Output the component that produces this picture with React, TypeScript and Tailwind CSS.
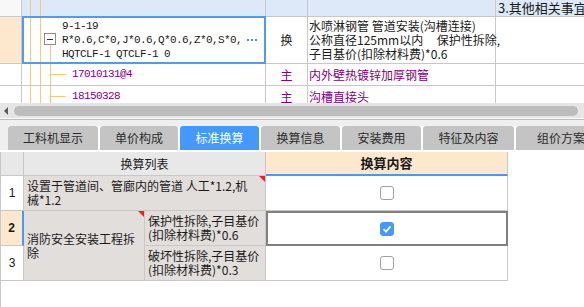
import React from 'react';

const line = 'border-[#c8c8c8]';
const cjk = "font-['Noto_Sans_CJK_SC','Liberation_Sans',sans-serif]";
const mono = "font-['Liberation_Mono','Noto_Sans_CJK_SC',monospace] text-[11px] tracking-[-0.6px]";

function Guides() {
  return (
    <>
      <div className="w-[8px] shrink-0" />
      <div className="w-[10px] shrink-0 border-l border-[#fcc878]" />
      <div className="w-[10px] shrink-0 border-l border-[#fcc878]" />
    </>
  );
}

function ChildRow({ code, name }: { code: string; name: string }) {
  return (
    <div className="flex h-[22px]">
      <div className={`w-[22px] shrink-0 border-r border-b ${line}`} />
      <div className={`w-[244px] shrink-0 flex border-r border-b ${line}`}>
        <Guides />
        <div className="w-[16px] shrink-0 border-l border-[#fcc878] flex items-center">
          <div className="h-px w-[15px] bg-[#fcc878]" />
        </div>
        <div className={`ml-[6px] flex items-center text-[#800080] ${mono}`}>{code}</div>
      </div>
      <div className={`w-[42px] shrink-0 border-r border-b ${line} flex items-center justify-center text-[12px] text-[#800080] ${cjk}`}>
        主
      </div>
      <div className={`w-[188px] shrink-0 border-r border-b ${line} pl-[1px] flex items-center text-[12px] text-[#800080] whitespace-nowrap ${cjk}`}>
        {name}
      </div>
      <div className={`flex-1 border-b ${line}`} />
    </div>
  );
}

function Tab({ label, w, active }: { label: string; w: string; active?: boolean }) {
  return (
    <div
      className={`${w} shrink-0 h-[24px] rounded-t-[3px] flex items-center justify-center text-[12px] ${cjk} ${
        active ? 'bg-[#4499ff] text-white' : 'bg-[#c4c4c4] text-[#2b2b2b]'
      }`}
    >
      {label}
    </div>
  );
}

function Check({ on }: { on?: boolean }) {
  return (
    <div
      className={`w-[14px] h-[14px] rounded-[3px] border flex items-center justify-center ${
        on ? 'bg-[#4499ff] border-[#4499ff]' : 'bg-white border-[#a0a0a0]'
      }`}
    >
      {on && (
        <svg width="10" height="10" viewBox="0 0 10 10">
          <path d="M1.5 5.2 L4 7.6 L8.6 2.4" stroke="#fff" strokeWidth="1.8" fill="none" />
        </svg>
      )}
    </div>
  );
}

function Flag() {
  return (
    <div className="absolute right-0 top-0 w-0 h-0 border-t-[6px] border-t-[#ff1a1a] border-l-[6px] border-l-transparent" />
  );
}

export default function App() {
  return (
    <div className={`w-[584px] h-[307px] overflow-hidden bg-white text-[#1a1a1a] ${cjk}`}>
      {/* upper grid */}
      <div className="h-[103px] overflow-hidden">
        <div className="flex h-[17px]">
          <div className={`w-[22px] shrink-0 border-r border-b ${line} bg-[#f8f8f8]`} />
          <div className={`w-[244px] shrink-0 flex border-r border-b ${line} bg-[#dde9f9]`}>
            <Guides />
          </div>
          <div className={`w-[42px] shrink-0 border-r border-b ${line} bg-[#dde9f9]`} />
          <div className={`w-[188px] shrink-0 border-r border-b ${line} bg-[#dde9f9]`} />
          <div className={`flex-1 min-w-0 border-b ${line} bg-[#dde9f9] pl-[2px] text-[13px] leading-[15px] whitespace-nowrap overflow-hidden`}>
            3.其他相关事宜说明
          </div>
        </div>

        <div className="flex h-[47px]">
          <div className={`w-[22px] shrink-0 border-r border-b ${line} bg-[#fde8cd]`} />
          <div className="w-[244px] h-[48px] -mt-px shrink-0 flex border-2 border-[#4c9cf5]">
            <div className="w-[6px] shrink-0" />
            <div className="w-[10px] shrink-0 border-l border-[#fcc878]" />
            <div className="w-[4px] shrink-0 border-l border-[#fcc878]" />
            <div className="w-[12px] shrink-0 flex flex-col pt-[15px]">
              <div className="w-[12px] h-[12px] border border-[#8c8c8c] flex items-center justify-center">
                <div className="w-[6px] h-px bg-[#333]" />
              </div>
              <div className="flex-1 w-px ml-[6px] bg-[#fcc878]" />
            </div>
            <div className={`ml-[6px] flex flex-col justify-center leading-[14px] whitespace-nowrap ${mono}`}>
              <div>9-1-19</div>
              <div className="flex items-center">
                R*0.6,C*0,J*0.6,Q*0.6,Z*0,S*0,
                <span className="ml-[5px] flex gap-[2px]">
                  <span className="w-[2px] h-[2px] bg-[#3d8ee0]" />
                  <span className="w-[2px] h-[2px] bg-[#3d8ee0]" />
                  <span className="w-[2px] h-[2px] bg-[#3d8ee0]" />
                </span>
              </div>
              <div>HQTCLF-1 QTCLF-1 0</div>
            </div>
          </div>
          <div className={`w-[42px] shrink-0 border-r border-b ${line} flex items-center justify-center text-[12px]`}>
            换
          </div>
          <div className={`w-[188px] shrink-0 border-r border-b ${line} pl-[1px] flex flex-col justify-center text-[12px] leading-[14px] whitespace-pre`}>
            <div>水喷淋钢管 管道安装(沟槽连接)</div>
            <div>公称直径125mm以内     保护性拆除,</div>
            <div>子目基价(扣除材料费)*0.6</div>
          </div>
          <div className={`flex-1 border-b ${line}`} />
        </div>

        <ChildRow code="17010131@4" name="内外壁热镀锌加厚钢管" />
        <ChildRow code="18150328" name="沟槽直接头" />
      </div>

      {/* horizontal scrollbar */}
      <div className="h-[15px] bg-[#e6e6e6] flex items-center">
        <div className="ml-[4px] w-0 h-0 border-y-[4px] border-y-transparent border-r-[4px] border-r-[#5a5a5a]" />
        <div className="ml-[6px] mr-[6px] flex-1 h-[10px] rounded-full bg-[#bdbdbd]" />
      </div>
      <div className="h-[1px] bg-[#fafafa]" />
      <div className="h-[1px] bg-[#bcbcbc]" />

      {/* tabs */}
      <div className="bg-[#efefef] pt-[6px] pl-[8px]">
        <div className="flex gap-[2px] bg-white">
          <Tab label="工料机显示" w="w-[90px]" />
          <Tab label="单价构成" w="w-[78px]" />
          <Tab label="标准换算" w="w-[79px]" active />
          <Tab label="换算信息" w="w-[79px]" />
          <Tab label="安装费用" w="w-[79px]" />
          <Tab label="特征及内容" w="w-[91px]" />
          <Tab label="组价方案" w="w-[90px]" />
        </div>
      </div>

      {/* conversion table */}
      <div className="pt-[2px] bg-white">
        <div className={`w-[508px] border-l ${line}`}>
          <div className="flex h-[24px]">
            <div className={`w-[23px] shrink-0 border-r border-b ${line} bg-[#e8e8e8]`} />
            <div className={`w-[242px] shrink-0 border-r border-b ${line} bg-[#e8e8e8] flex items-center justify-center text-[12px]`}>
              换算列表
            </div>
            <div className={`w-[242px] shrink-0 border-r ${line} border-b-2 border-b-[#4499ff] bg-[#fde8cd] flex items-center justify-center text-[13px] font-bold`}>
              换算内容
            </div>
          </div>

          <div className="grid grid-cols-[23px_121px_121px_242px] grid-rows-[35px_35px_35px] text-[12px] leading-[14px]">
            <div className={`border-r border-b ${line} flex items-center justify-center font-['Liberation_Sans',sans-serif]`}>1</div>
            <div className={`relative col-span-2 border-r border-b ${line} bg-[#e2dedb] pl-[3px] flex flex-col justify-center whitespace-nowrap`}>
              <div>设置于管道间、管廊内的管道 人工*1.2,机</div>
              <div>械*1.2</div>
              <Flag />
            </div>
            <div className={`border-r border-b ${line} flex items-center justify-center`}>
              <Check />
            </div>

            <div className={`border-b ${line} border-r-2 border-r-[#4499ff] bg-[#fde8cd] flex items-center justify-center font-bold font-['Liberation_Sans',sans-serif]`}>2</div>
            <div className={`relative row-span-2 border-r border-b ${line} bg-[#e2dedb] pl-[3px] flex flex-col justify-center whitespace-nowrap`}>
              <div>消防安全安装工程拆</div>
              <div>除</div>
              <Flag />
            </div>
            <div className={`border-r border-b ${line} bg-[#e2dedb] pl-[3px] flex flex-col justify-center whitespace-nowrap`}>
              <div>保护性拆除,子目基价</div>
              <div>(扣除材料费)*0.6</div>
            </div>
            <div className="border-2 border-[#808080] flex items-center justify-center">
              <Check on />
            </div>

            <div className={`border-r border-b ${line} flex items-center justify-center font-['Liberation_Sans',sans-serif]`}>3</div>
            <div className={`border-r border-b ${line} bg-[#e2dedb] pl-[3px] flex flex-col justify-center whitespace-nowrap`}>
              <div>破坏性拆除,子目基价</div>
              <div>(扣除材料费)*0.3</div>
            </div>
            <div className={`border-r border-b ${line} flex items-center justify-center`}>
              <Check />
            </div>
          </div>
          <div className="h-[40px]" />
        </div>
      </div>
    </div>
  );
}
